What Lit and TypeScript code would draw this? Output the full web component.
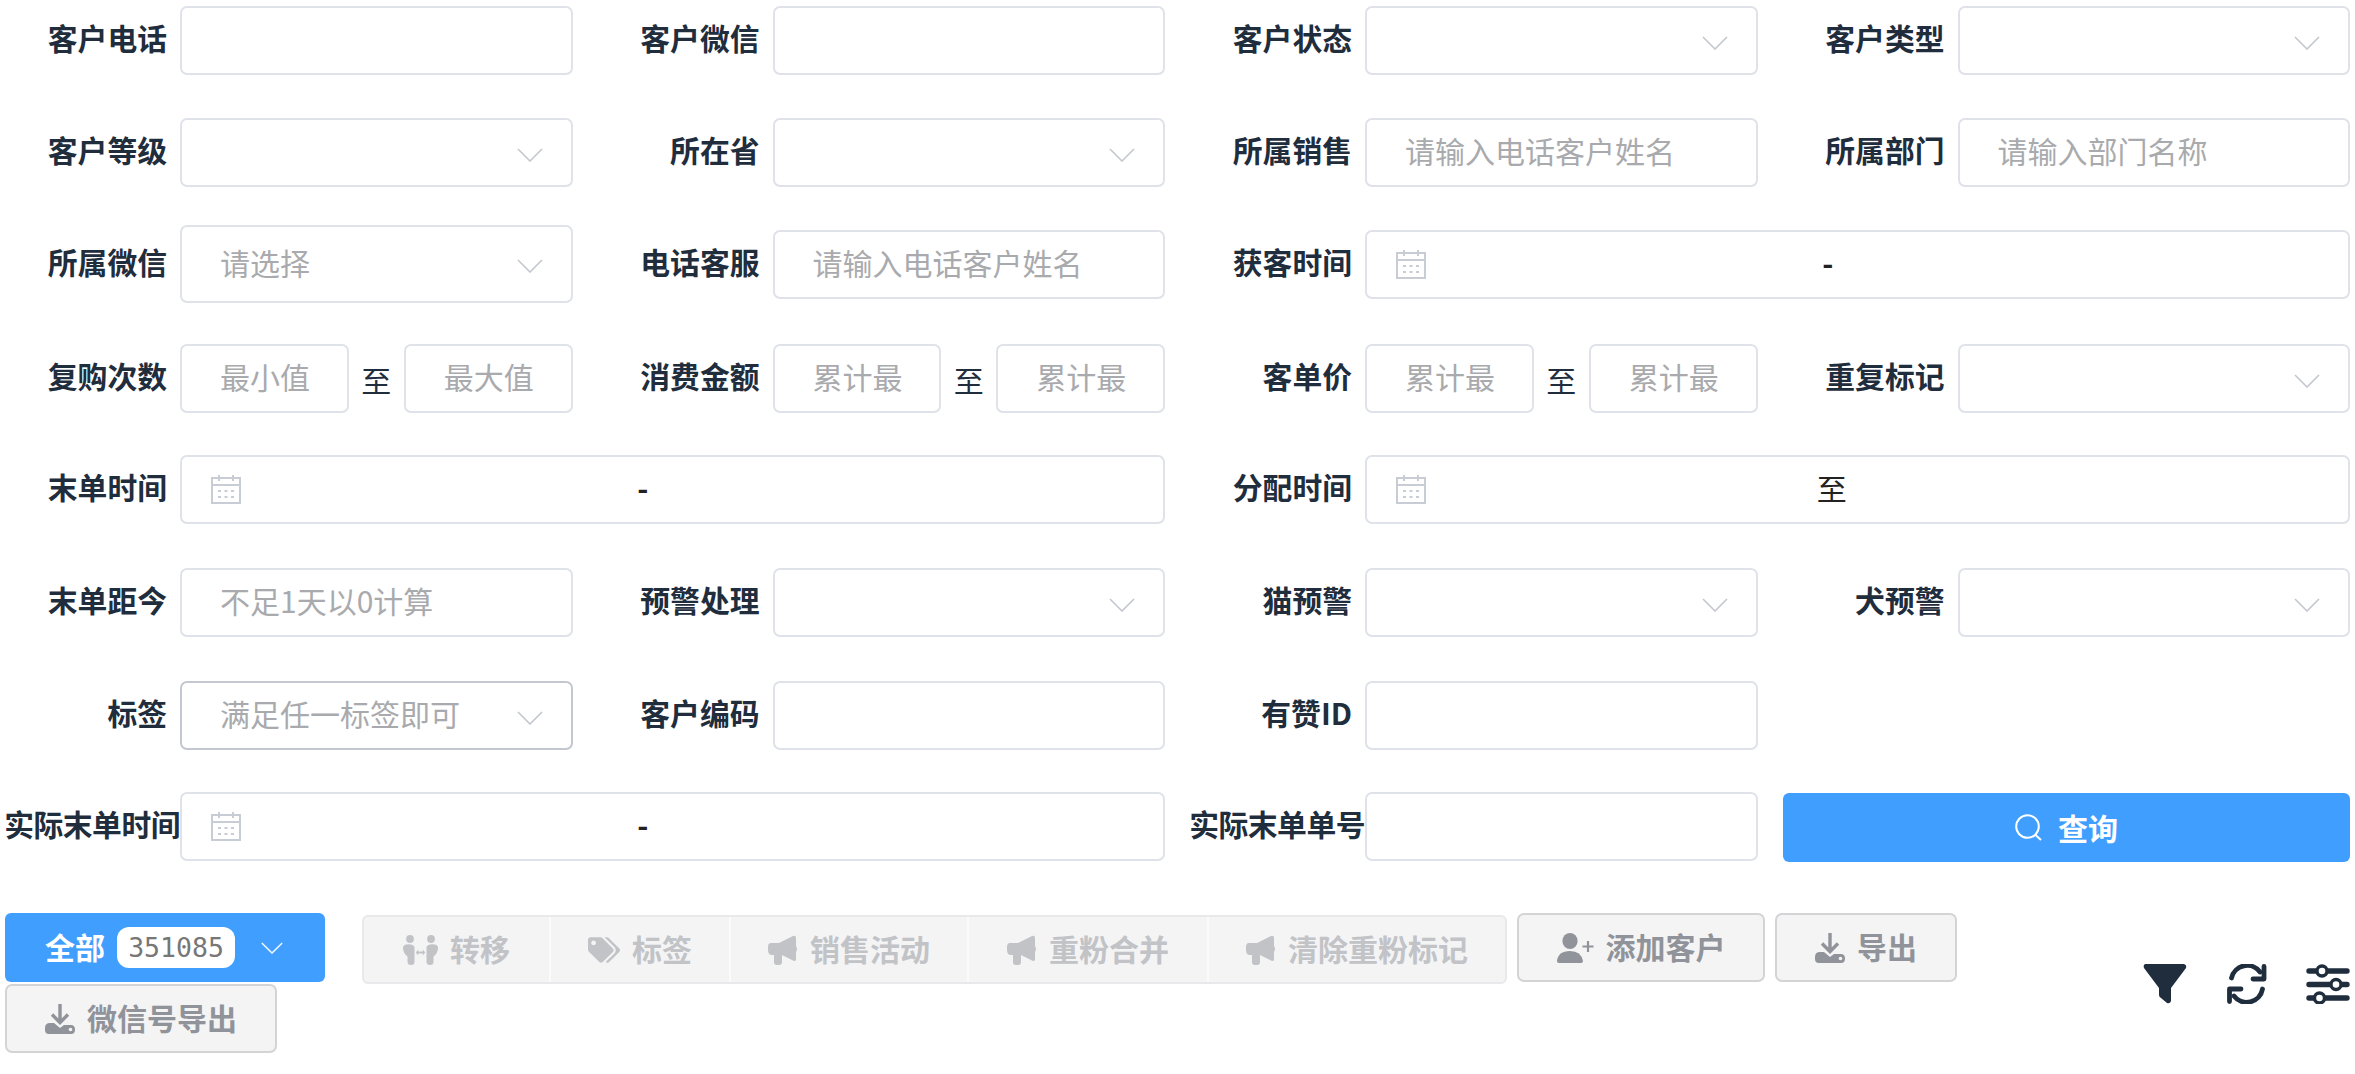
import { LitElement, html, css, svg } from "lit";
import { customElement } from "lit/decorators.js";

const chevron = html`<svg class="chev" viewBox="0 0 26 14"><path d="M1 1 L13 13 L25 1" fill="none" stroke="currentColor" stroke-width="1.6"/></svg>`;
const calendar = html`<svg class="cal" viewBox="0 0 30 30" fill="none" stroke="#c8ccd4" stroke-width="2">
  <rect x="1" y="4" width="28" height="25"/><path d="M1 11 H29 M8 1 V7 M22 1 V7"/>
  <path d="M7 17 H10 M13.5 17 H16.5 M20 17 H23 M7 23 H10 M13.5 23 H16.5 M20 23 H23" stroke-width="1.8"/></svg>`;
const search = html`<svg class="search" viewBox="0 0 27 27" fill="none" stroke="#fff" stroke-width="2"><circle cx="12.5" cy="12.5" r="11.3"/><path d="M20.5 21 L26 26"/></svg>`;
const people = html`<svg class="ico" style="width:35px" viewBox="0 0 35 30" fill="currentColor">
  <circle cx="7" cy="4" r="3.9"/><circle cx="28" cy="4" r="3.9"/>
  <path d="M3 9.5 Q10 8.500 11.5 12 L11.5 27 Q11.500 30 8 30 Q4.500 30 4.500 27 L4.500 21.500 Q0 18 0 13 Q0 10 3 9.500Z"/>
  <path d="M32 9.500 Q25 8.500 23.500 12 L23.500 27 Q23.500 30 27 30 Q30.500 30 30.500 27 L30.500 21.500 Q35 18 35 13 Q35 10 32 9.500Z"/>
  <path d="M12.800 17.500 L15.200 14.500 V16.500 H19.800 V14.500 L22.200 17.500 L19.800 20.500 V18.500 H15.200 V20.500Z"/></svg>`;
const tags = html`<svg class="ico" style="width:32px;height:26px" viewBox="0 0 640 512" fill="currentColor"><path d="M497.941 225.941L286.059 14.059A48 48 0 0 0 252.118 0H48C21.49 0 0 21.49 0 48v204.118a48 48 0 0 0 14.059 33.941l211.882 211.882c18.744 18.745 49.136 18.746 67.882 0l204.118-204.118c18.745-18.745 18.745-49.137 0-67.882zM112 160c-26.51 0-48-21.49-48-48s21.49-48 48-48 48 21.49 48 48-21.49 48-48 48zm513.941 133.823L421.823 497.941c-18.745 18.745-49.137 18.745-67.882 0l-.36-.36L527.64 323.522c16.999-16.999 26.36-39.6 26.36-63.64s-9.362-46.641-26.36-63.64L331.397 0h48.721a48 48 0 0 1 33.941 14.059l211.882 211.882c18.745 18.745 18.745 49.137 0 67.882z"/></svg>`;
const horn = html`<svg class="ico" viewBox="0 0 30 30" fill="currentColor"><path d="M3 8 H11 L25 1 Q28 0 28 3 V11 Q30 14 28 17 V24 Q28 27 25 25.5 L14 20 V27 Q14 30 11 30 H9 Q6 30 6 27 V20 H4 Q0 20 0 15 V12 Q0 8 3 8Z"/></svg>`;
const userPlus = html`<svg class="ico" style="width:37px" viewBox="0 0 37 30" fill="currentColor"><ellipse cx="13" cy="8" rx="7.6" ry="8"/><path d="M2 30 Q0 30 0 28 Q1 18 13 18 Q24 18 26 28 Q26 30 24 30Z"/><path d="M31 8 V19 M25.5 13.5 H36.5" stroke="currentColor" stroke-width="2.2" fill="none"/></svg>`;
const download = html`<svg class="ico" viewBox="0 0 30 30" fill="currentColor"><path d="M15 0 V18 M7 10.5 L15 18.5 L23 10.5" fill="none" stroke="currentColor" stroke-width="3.4"/><path d="M5 19 H9 L15 24 L19 21 H26 Q30 21 30 25.5 Q30 30 26 30 H4 Q0 30 0 26 V24 Q0 19 5 19Z"/><circle cx="25.5" cy="25.5" r="1.8" fill="#f4f4f5"/></svg>`;
const filterIcon = svg`<path d="M2 0 H41 Q44 1 43 4 L28 24 V37 Q27 40 24 39 L18 34 Q16 33 16 31 V24 L1 4 Q0 1 2 0Z" fill="currentColor"/>`;
const refreshIcon = svg`<g fill="none" stroke="currentColor" stroke-width="4.8" stroke-linecap="round" stroke-linejoin="round"><path d="M4.5 14 A 16 16 0 0 1 33 8"/><path d="M37 2.500 V15 H26"/><path d="M35.5 25 A 16 16 0 0 1 7 32"/><path d="M2.500 37.500 V25 H14"/></g>`;
const slidersIcon = svg`<g fill="none" stroke="currentColor" stroke-width="5.4" stroke-linecap="round"><path d="M3 7 H41 M3 20.500 H41 M3 34 H41"/></g><g fill="#fff" stroke="currentColor" stroke-width="3.4"><circle cx="16" cy="7" r="5"/><circle cx="30" cy="20.500" r="5"/><circle cx="13.500" cy="34" r="5"/></g>`;

@customElement("app-root")
export class AppRoot extends LitElement {
  static styles = css`
    :host { display: block; width: 2355px; height: 1074px; overflow: hidden; background: #fff; color: #1f2d3d;
      font-family: "Noto Sans CJK SC", "Noto Sans", sans-serif; font-size: 30px; }
    .form { display: grid; grid-template-columns: repeat(4, 572.5px); column-gap: 20px;
      grid-template-rows: 112px 107px 119px 111px 113px 113px 111px 70px; padding-top: 6px; height: 856px; align-items: start; }
    .field { display: flex; align-items: center; height: 69px; min-width: 0; }
    .tallrow { height: 78px; }
    .span2 { grid-column: span 2; }
    .label { flex: 0 0 180px; box-sizing: border-box; padding-right: 13px; text-align: right; font-size: 29.8px; font-weight: 700; white-space: nowrap; line-height: 40px; margin-top: -7px; }
    .label.tight { padding-right: 0; letter-spacing: -0.5px; }
    .box { flex: 1; min-width: 0; height: 69px; box-sizing: border-box; border: 2px solid #e0e2ea; border-radius: 7px; background: #fff;
      display: flex; align-items: center; padding: 0 38px; color: #a9aaad; white-space: nowrap; overflow: hidden; }
    .box > span { margin-top: -5px; }
    .box.tall { height: 78px; }
    .box.focus { border-color: #c3c7cf; }
    .select { justify-content: space-between; padding-right: 16px; }
    .chev { width: 26px; height: 14px; color: #c3c7ce; flex: none; margin-top: 4px; margin-right: 12px; }
    .range { flex: 1; display: flex; align-items: center; min-width: 0; }
    .to { flex: 0 0 55px; text-align: center; color: #1f2d3d; margin-top: 1px; }
    .date { padding: 0 0 0 29px; color: #1f2d3d; }
    .cal { width: 30px; height: 30px; flex: none; margin-top: -1px; }
    .date-gap { width: 39.7%; flex: none; }
    .date-sep { width: 5%; text-align: center; flex: none; color: #222; font-weight: 700; }
    .date-sep.cjk { font-weight: 400; padding-left: 4px; box-sizing: content-box; }
    .query { grid-column: span 1; margin: 1px 0 0 5.500px; height: 69px; width: 567px; box-sizing: border-box; background: #409eff; color: #fff; border-radius: 6px;
      display: flex; align-items: center; justify-content: center; gap: 16px; font-weight: 700; }
    .query span { margin-top: -2px; }
    .search { width: 27px; height: 27px; }
    .toolbar { display: flex; align-items: center; justify-content: space-between; padding: 51px 5px 0 5px; }
    .left { flex: 0 0 2100px; display: flex; flex-wrap: wrap; align-items: flex-start; }
    .all { width: 320px; height: 69px; box-sizing: border-box; background: #409eff; color: #fff; border-radius: 6px; display: flex; align-items: center;
      padding-left: 40px; font-weight: 700; margin-right: 37px; }
    .all > span:first-child { margin-top: -3px; }
    .badge { margin-left: 12px; width: 118px; height: 41px; background: #fff; border-radius: 12px; color: #777; font-family: "DejaVu Sans Mono", monospace; font-size: 26.5px;
      display: flex; align-items: center; justify-content: center; font-weight: 400; }
    .all .chev { color: #fff; width: 22px; height: 12px; margin: 0 0 0 26px; }
    .group { display: flex; height: 69px; margin-top: 2px; margin-right: 10px; box-sizing: border-box; border: 2px solid #e9e9eb; border-radius: 6px; background: #f4f4f5; color: #c1c3c7; font-weight: 700; }
    .seg { display: flex; align-items: center; justify-content: center; gap: 12px; box-sizing: border-box; border-left: 2px solid #fbfbfb; }
    .seg:first-child { border-left: 0; }
    .seg span, .btn span { margin-top: -3px; }
    .ico { width: 30px; height: 30px; flex: none; }
    .btn { height: 69px; box-sizing: border-box; border: 2px solid #d3d4d6; border-radius: 7px; background: #f4f4f5; color: #909399; font-weight: 700;
      display: flex; align-items: center; justify-content: center; gap: 12px; margin-right: 10px; }
    .icons { display: flex; align-items: center; gap: 39.500px; color: #1f2d3d; margin-bottom: -1px; }
    .icons svg { width: 44px; height: 40px; display: block; }
    .icons svg.r { width: 40px; }
  `;

  private sel(ph = "", cls = "") {
    return html`<div class="box select ${cls}"><span>${ph}</span>${chevron}</div>`;
  }
  private txt(ph = "") {
    return html`<div class="box"><span>${ph}</span></div>`;
  }
  private f(label: string, control: unknown, cls = "", labelCls = "") {
    return html`<div class="field ${cls}"><div class="label ${labelCls}">${label}</div>${control}</div>`;
  }
  private rng(a: string, b: string) {
    return html`<div class="range">${this.txt(a)}<div class="to">至</div>${this.txt(b)}</div>`;
  }
  private date(sep: string) {
    return html`<div class="box date">${calendar}<span class="date-gap"></span><span class="date-sep ${sep === "至" ? "cjk" : ""}">${sep}</span></div>`;
  }

  render() {
    return html`
      <div class="form">
        ${this.f("客户电话", this.txt())}
        ${this.f("客户微信", this.txt())}
        ${this.f("客户状态", this.sel())}
        ${this.f("客户类型", this.sel())}

        ${this.f("客户等级", this.sel())}
        ${this.f("所在省", this.sel())}
        ${this.f("所属销售", this.txt("请输入电话客户姓名"))}
        ${this.f("所属部门", this.txt("请输入部门名称"))}

        ${this.f("所属微信", this.sel("请选择", "tall"), "tallrow")}
        ${this.f("电话客服", this.txt("请输入电话客户姓名"), "tallrow")}
        ${this.f("获客时间", this.date("-"), "tallrow span2")}

        ${this.f("复购次数", this.rng("最小值", "最大值"))}
        ${this.f("消费金额", this.rng("累计最", "累计最"))}
        ${this.f("客单价", this.rng("累计最", "累计最"))}
        ${this.f("重复标记", this.sel())}

        ${this.f("末单时间", this.date("-"), "span2")}
        ${this.f("分配时间", this.date("至"), "span2")}

        ${this.f("末单距今", this.txt("不足1天以0计算"))}
        ${this.f("预警处理", this.sel())}
        ${this.f("猫预警", this.sel())}
        ${this.f("犬预警", this.sel())}

        ${this.f("标签", this.sel("满足任一标签即可", "focus"))}
        ${this.f("客户编码", this.txt())}
        ${this.f("有赞ID", this.txt())}
        <div></div>

        ${this.f("实际末单时间", this.date("-"), "span2", "tight")}
        ${this.f("实际末单单号", this.txt(), "", "tight")}
        <div class="query">${search}<span>查询</span></div>
      </div>

      <div class="toolbar">
        <div class="left">
          <div class="all"><span>全部</span><span class="badge">351085</span>${chevron}</div>
          <div class="group">
            <div class="seg" style="width:185px">${people}<span>转移</span></div>
            <div class="seg" style="width:180px">${tags}<span>标签</span></div>
            <div class="seg" style="width:238px">${horn}<span>销售活动</span></div>
            <div class="seg" style="width:240px">${horn}<span>重粉合并</span></div>
            <div class="seg" style="width:298px">${horn}<span>清除重粉标记</span></div>
          </div>
          <div class="btn" style="width:248px">${userPlus}<span>添加客户</span></div>
          <div class="btn" style="width:182px">${download}<span>导出</span></div>
          <div class="btn" style="width:272px">${download}<span>微信号导出</span></div>
        </div>
        <div class="icons">
          <svg viewBox="0 0 44 40">${filterIcon}</svg>
          <svg class="r" viewBox="0 0 40 40">${refreshIcon}</svg>
          <svg viewBox="0 0 44 40">${slidersIcon}</svg>
        </div>
      </div>
    `;
  }
}
